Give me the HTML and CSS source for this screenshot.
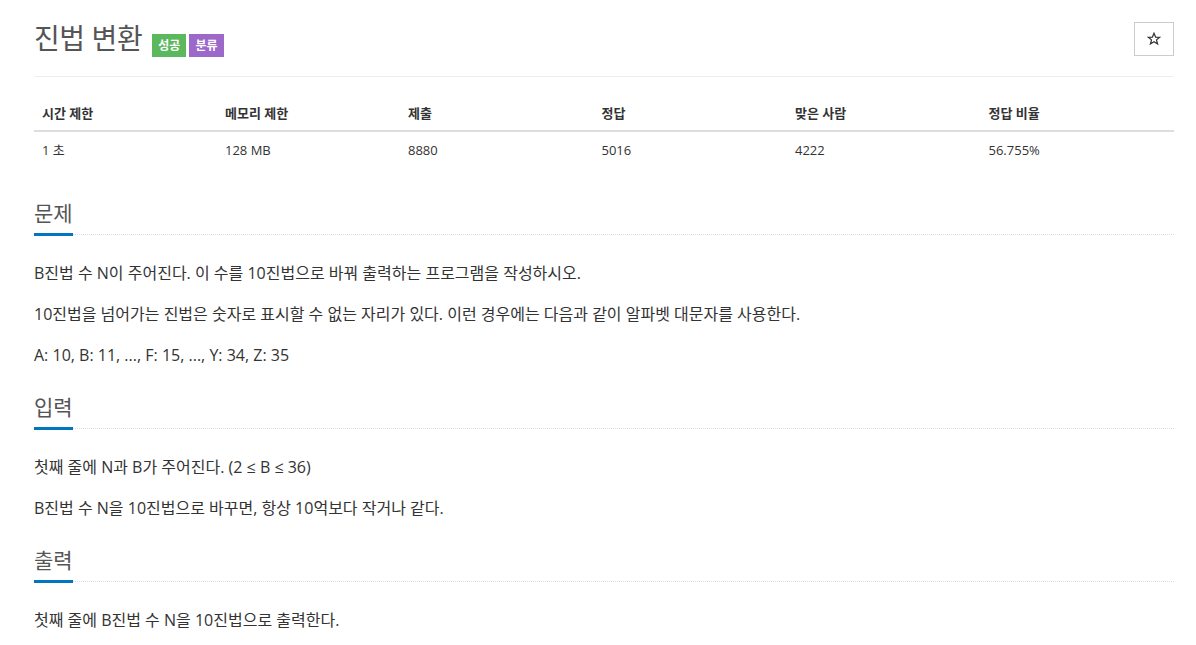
FILE: index.html
```html
<!DOCTYPE html>
<html lang="ko">
<head>
<meta charset="utf-8">
<title>진법 변환</title>
<link rel="stylesheet" href="styles.css">
</head>
<body>
<div class="container">
  <div class="page-header">
    <h1 class="title">
      <span class="title-text">진법 변환</span>
      <span class="badges">
        <span class="badge badge-green">성공</span>
        <span class="badge badge-purple">분류</span>
      </span>
    </h1>
    <button class="star-btn" type="button" aria-label="즐겨찾기">
      <svg width="14" height="14" viewBox="0 0 14 14" aria-hidden="true">
        <path d="M7 1.2 L8.6 5.1 L12.7 5.3 L9.5 7.9 L10.6 12 L7 9.7 L3.4 12 L4.5 7.9 L1.3 5.3 L5.4 5.1 Z" fill="none" stroke="#333" stroke-width="1.2" stroke-linejoin="miter"/>
      </svg>
    </button>
  </div>

  <table class="info-table">
    <colgroup>
      <col class="col-a"><col class="col-a"><col class="col-b"><col class="col-b"><col class="col-b"><col class="col-b">
    </colgroup>
    <thead>
      <tr><th>시간 제한</th><th>메모리 제한</th><th>제출</th><th>정답</th><th>맞은 사람</th><th>정답 비율</th></tr>
    </thead>
    <tbody>
      <tr><td>1 초</td><td>128 MB</td><td>8880</td><td>5016</td><td>4222</td><td>56.755%</td></tr>
    </tbody>
  </table>

  <section class="problem-section">
    <h2 class="headline"><span>문제</span></h2>
    <p>B진법 수 N이 주어진다. 이 수를 10진법으로 바꿔 출력하는 프로그램을 작성하시오.</p>
    <p>10진법을 넘어가는 진법은 숫자로 표시할 수 없는 자리가 있다. 이런 경우에는 다음과 같이 알파벳 대문자를 사용한다.</p>
    <p>A: 10, B: 11, ..., F: 15, ..., Y: 34, Z: 35</p>
  </section>

  <section class="problem-section">
    <h2 class="headline"><span>입력</span></h2>
    <p>첫째 줄에 N과 B가 주어진다. (2 ≤ B ≤ 36)</p>
    <p>B진법 수 N을 10진법으로 바꾸면, 항상 10억보다 작거나 같다.</p>
  </section>

  <section class="problem-section">
    <h2 class="headline"><span>출력</span></h2>
    <p>첫째 줄에 B진법 수 N을 10진법으로 출력한다.</p>
  </section>
</div>
</body>
</html>
```

FILE: styles.css
```css
* { box-sizing: border-box; }

body {
  margin: 0;
  background: #fff;
  color: #333;
  font-family: "Open Sans", "Noto Sans CJK KR", sans-serif;
  font-size: 13px;
}

.container {
  width: 1140px;
  margin-left: 34px;
}

.page-header {
  display: flex;
  align-items: center;
  justify-content: space-between;
  padding-top: 18px;
  padding-bottom: 18px;
  border-bottom: 1px solid #eee;
}

.title {
  margin: 0;
  display: flex;
  align-items: center;
  font-size: 28px;
  line-height: 40px;
  font-weight: 400;
  color: #555;
  letter-spacing: -0.4px;
}

.badges {
  display: flex;
  gap: 3px;
  margin-left: 10px;
  margin-top: 14px;
  letter-spacing: 0;
}

.badge {
  display: inline-block;
  height: 23px;
  line-height: 23px;
  padding: 0 6px;
  font-size: 12px;
  font-weight: 700;
  color: #fff;
}

.badge-green { background: #5cb85c; }
.badge-purple { background: #9c68c9; }

.star-btn {
  display: flex;
  align-items: center;
  justify-content: center;
  width: 40px;
  height: 34px;
  margin-top: 2px;
  border: 1px solid #ccc;
  background: #fff;
  padding: 0;
}

.info-table {
  width: 1140px;
  border-collapse: collapse;
  table-layout: fixed;
  margin-top: 18px;
}

.col-a { width: 183px; }
.col-b { width: 193.5px; }

.info-table th,
.info-table td {
  text-align: left;
  padding: 8px;
  line-height: 20px;
  font-size: 13px;
}

.info-table th {
  font-weight: 700;
  color: #333;
  border-bottom: 2px solid #ddd;
  padding-bottom: 7px;
}

.problem-section {
  margin-top: 33px;
}

.problem-section + .problem-section {
  margin-top: 27px;
}

.headline {
  margin: 0 0 25px;
  font-size: 21px;
  font-weight: 400;
  line-height: 24px;
  color: #555;
  border-bottom: 1px dotted #ddd;
}

.headline span {
  display: inline-block;
  padding-bottom: 8px;
  border-bottom: 3px solid #0076c0;
  margin-bottom: -2px;
}

.problem-section p {
  margin: 0 0 15px;
  font-size: 16px;
  line-height: 26px;
  color: #333;
}
```
